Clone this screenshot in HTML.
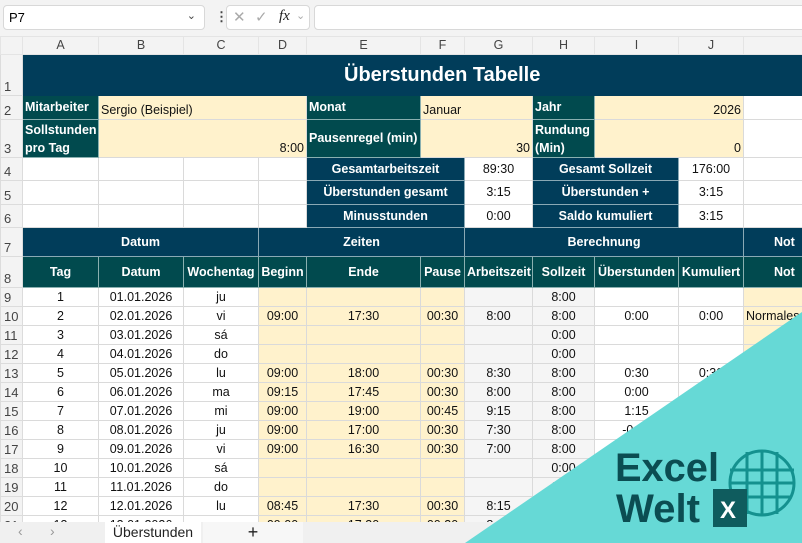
<!DOCTYPE html>
<html><head><meta charset="utf-8"><style>
*{box-sizing:border-box;margin:0;padding:0}
body{width:802px;height:543px;overflow:hidden;background:#fff;font-family:"Liberation Sans",Arial,sans-serif;position:relative}
.top{position:absolute;left:0;top:0;width:802px;height:36px;background:#f3f3f3}
.box{position:absolute;background:#fff;border:1px solid #d8d8d8;border-radius:4px}
table{position:absolute;left:0;top:36px;width:802px;border-collapse:collapse;table-layout:fixed;font-size:12.5px;color:#111}
td{border:1px solid #dadada;overflow:hidden;white-space:nowrap;padding:0 2px;text-align:center;vertical-align:bottom;line-height:17px}
td.rh{background:#f3f3f3;color:#444;text-align:left;padding-left:3px;border-color:#dcdcdc;font-size:13px}
tr.ch td{background:#f3f3f3;color:#444;vertical-align:middle;border-color:#e4e4e4}
.nv{background:#013d5a;color:#fff;font-weight:bold;border-color:#8aa9b5}
.tl{background:#014a4e;color:#fff;font-weight:bold;border-color:#8ab0b0}
.y{background:#fff2cc}
.g{background:#f5f5f5}
.l{text-align:left}.r{text-align:right}
.m{vertical-align:middle}
.tab{position:absolute;top:522px;left:0;width:802px;height:21px;background:#f0f0f0;font-size:14px;color:#222}
</style></head><body>
<div class="top">
<div class="box" style="left:3px;top:5px;width:202px;height:25px"><span style="position:absolute;left:5px;top:4px;font-size:13px">P7</span><span style="position:absolute;right:8px;top:3px;font-size:11px;color:#444">&#8964;</span></div>
<div style="position:absolute;left:215px;top:9px;width:3px;font-size:13px;color:#444;font-weight:bold">&#8942;</div>
<div class="box" style="left:226px;top:5px;width:84px;height:25px;color:#aaa;font-size:15px"><span style="position:absolute;left:6px;top:2px">&#10005;</span><span style="position:absolute;left:28px;top:2px">&#10003;</span><span style="position:absolute;left:52px;top:2px;color:#222;font-style:italic;font-family:'Liberation Serif',serif">fx</span><span style="position:absolute;left:69px;top:3px;font-size:11px">&#8964;</span></div>
<div class="box" style="left:314px;top:5px;width:492px;height:25px"></div>
</div>
<table>
<colgroup><col style="width:22px"><col style="width:76px"><col style="width:85px"><col style="width:75px"><col style="width:48px"><col style="width:114px"><col style="width:44px"><col style="width:68px"><col style="width:62px"><col style="width:84px"><col style="width:65px"><col style="width:59px"></colgroup>
<tr class="ch" style="height:18px"><td style="background:#f3f3f3"></td><td>A</td><td>B</td><td>C</td><td>D</td><td>E</td><td>F</td><td>G</td><td>H</td><td>I</td><td>J</td><td></td></tr>
<tr style="height:41px"><td class="rh">1</td><td colspan="11" class="nv m l" style="font-size:20px;padding-left:321px;border-color:#013d5a">Überstunden Tabelle</td></tr>
<tr style="height:24px"><td class="rh">2</td><td class="tl l m">Mitarbeiter</td><td colspan="3" class="y l">Sergio (Beispiel)</td><td class="tl l m">Monat</td><td colspan="2" class="y l">Januar</td><td class="tl l m">Jahr</td><td colspan="2" class="y r">2026</td><td></td></tr>
<tr style="height:38px"><td class="rh">3</td><td class="tl l" style="white-space:normal;line-height:18px">Sollstunden pro Tag</td><td colspan="3" class="y r">8:00</td><td class="tl l m">Pausenregel (min)</td><td colspan="2" class="y r">30</td><td class="tl l" style="white-space:normal;line-height:18px">Rundung (Min)</td><td colspan="2" class="y r">0</td><td></td></tr>
<tr style="height:23px"><td class="rh">4</td><td></td><td></td><td></td><td></td><td colspan="2" class="nv m">Gesamtarbeitszeit</td><td class="m">89:30</td><td colspan="2" class="nv m">Gesamt Sollzeit</td><td class="m">176:00</td><td></td></tr>
<tr style="height:24px"><td class="rh">5</td><td></td><td></td><td></td><td></td><td colspan="2" class="nv m">Überstunden gesamt</td><td class="m">3:15</td><td colspan="2" class="nv m">Überstunden +</td><td class="m">3:15</td><td></td></tr>
<tr style="height:23px"><td class="rh">6</td><td></td><td></td><td></td><td></td><td colspan="2" class="nv m">Minusstunden</td><td class="m">0:00</td><td colspan="2" class="nv m">Saldo kumuliert</td><td class="m">3:15</td><td></td></tr>
<tr style="height:29px"><td class="rh">7</td><td colspan="3" class="nv m">Datum</td><td colspan="3" class="nv m">Zeiten</td><td colspan="4" class="nv m">Berechnung</td><td class="nv m l" style="padding-left:30px">Not</td></tr>
<tr style="height:31px"><td class="rh">8</td><td class="tl m">Tag</td><td class="tl m">Datum</td><td class="tl m">Wochentag</td><td class="tl m">Beginn</td><td class="tl m">Ende</td><td class="tl m">Pause</td><td class="tl m">Arbeitszeit</td><td class="tl m">Sollzeit</td><td class="tl m">Überstunden</td><td class="tl m">Kumuliert</td><td class="tl m l" style="padding-left:30px">Not</td></tr>
<tr style="height:19px"><td class="rh">9</td><td>1</td><td>01.01.2026</td><td>ju</td><td class="y"></td><td class="y"></td><td class="y"></td><td class="g"></td><td class="g">8:00</td><td></td><td></td><td class="y"></td></tr>
<tr style="height:19px"><td class="rh">10</td><td>2</td><td>02.01.2026</td><td>vi</td><td class="y">09:00</td><td class="y">17:30</td><td class="y">00:30</td><td class="g">8:00</td><td class="g">8:00</td><td>0:00</td><td>0:00</td><td class="y l">Normales</td></tr>
<tr style="height:19px"><td class="rh">11</td><td>3</td><td>03.01.2026</td><td>sá</td><td class="y"></td><td class="y"></td><td class="y"></td><td class="g"></td><td class="g">0:00</td><td></td><td></td><td class="y"></td></tr>
<tr style="height:19px"><td class="rh">12</td><td>4</td><td>04.01.2026</td><td>do</td><td class="y"></td><td class="y"></td><td class="y"></td><td class="g"></td><td class="g">0:00</td><td></td><td></td><td class="y"></td></tr>
<tr style="height:19px"><td class="rh">13</td><td>5</td><td>05.01.2026</td><td>lu</td><td class="y">09:00</td><td class="y">18:00</td><td class="y">00:30</td><td class="g">8:30</td><td class="g">8:00</td><td>0:30</td><td>0:30</td><td class="y"></td></tr>
<tr style="height:19px"><td class="rh">14</td><td>6</td><td>06.01.2026</td><td>ma</td><td class="y">09:15</td><td class="y">17:45</td><td class="y">00:30</td><td class="g">8:00</td><td class="g">8:00</td><td>0:00</td><td></td><td class="y"></td></tr>
<tr style="height:19px"><td class="rh">15</td><td>7</td><td>07.01.2026</td><td>mi</td><td class="y">09:00</td><td class="y">19:00</td><td class="y">00:45</td><td class="g">9:15</td><td class="g">8:00</td><td>1:15</td><td></td><td class="y"></td></tr>
<tr style="height:19px"><td class="rh">16</td><td>8</td><td>08.01.2026</td><td>ju</td><td class="y">09:00</td><td class="y">17:00</td><td class="y">00:30</td><td class="g">7:30</td><td class="g">8:00</td><td>-0:30</td><td></td><td class="y"></td></tr>
<tr style="height:19px"><td class="rh">17</td><td>9</td><td>09.01.2026</td><td>vi</td><td class="y">09:00</td><td class="y">16:30</td><td class="y">00:30</td><td class="g">7:00</td><td class="g">8:00</td><td></td><td></td><td class="y"></td></tr>
<tr style="height:19px"><td class="rh">18</td><td>10</td><td>10.01.2026</td><td>sá</td><td class="y"></td><td class="y"></td><td class="y"></td><td class="g"></td><td class="g">0:00</td><td></td><td></td><td class="y"></td></tr>
<tr style="height:19px"><td class="rh">19</td><td>11</td><td>11.01.2026</td><td>do</td><td class="y"></td><td class="y"></td><td class="y"></td><td class="g"></td><td class="g">0:00</td><td></td><td></td><td class="y"></td></tr>
<tr style="height:19px"><td class="rh">20</td><td>12</td><td>12.01.2026</td><td>lu</td><td class="y">08:45</td><td class="y">17:30</td><td class="y">00:30</td><td class="g">8:15</td><td class="g">8:00</td><td></td><td></td><td class="y"></td></tr>
<tr style="height:19px"><td class="rh">21</td><td>13</td><td>13.01.2026</td><td>ma</td><td class="y">09:00</td><td class="y">17:30</td><td class="y">00:30</td><td class="g">8:00</td><td class="g">8:00</td><td></td><td></td><td class="y"></td></tr>
</table>
<div class="tab">
<span style="position:absolute;left:18px;top:1px;color:#999">&#8249;</span>
<span style="position:absolute;left:50px;top:1px;color:#999">&#8250;</span>
<div style="position:absolute;left:105px;top:0;width:96px;height:21px;background:#fff;text-align:center;line-height:21px">Überstunden</div>
<div style="position:absolute;left:203px;top:0;width:100px;height:21px;background:#f7f7f7;text-align:center;line-height:21px;font-size:18px">+</div>
</div>
<svg style="position:absolute;left:0;top:0" width="802" height="543">
<polygon points="465,543 802,312 802,543" fill="#66d9d6"/>
<text x="615" y="481" font-family="Liberation Sans,sans-serif" font-weight="bold" font-size="40" fill="#0b4d52" textLength="104" lengthAdjust="spacingAndGlyphs">Excel</text>
<text x="616" y="522" font-family="Liberation Sans,sans-serif" font-weight="bold" font-size="40" fill="#0b4d52" textLength="84" lengthAdjust="spacingAndGlyphs">Welt</text>
<g stroke="#14918f" stroke-width="3" fill="none">
<circle cx="762" cy="483" r="32"/>
<line x1="730" y1="470" x2="794" y2="470"/><line x1="730" y1="483" x2="794" y2="483"/><line x1="732" y1="497" x2="792" y2="497"/>
<line x1="747" y1="452" x2="747" y2="514"/><line x1="762" y1="451" x2="762" y2="515"/><line x1="777" y1="452" x2="777" y2="514"/>
</g>
<rect x="713" y="489" width="34" height="38" fill="#0f5c5e"/>
<text x="720" y="518" font-family="Liberation Sans,sans-serif" font-weight="bold" font-size="24" fill="#fff">X</text>
</svg>
</body></html>
